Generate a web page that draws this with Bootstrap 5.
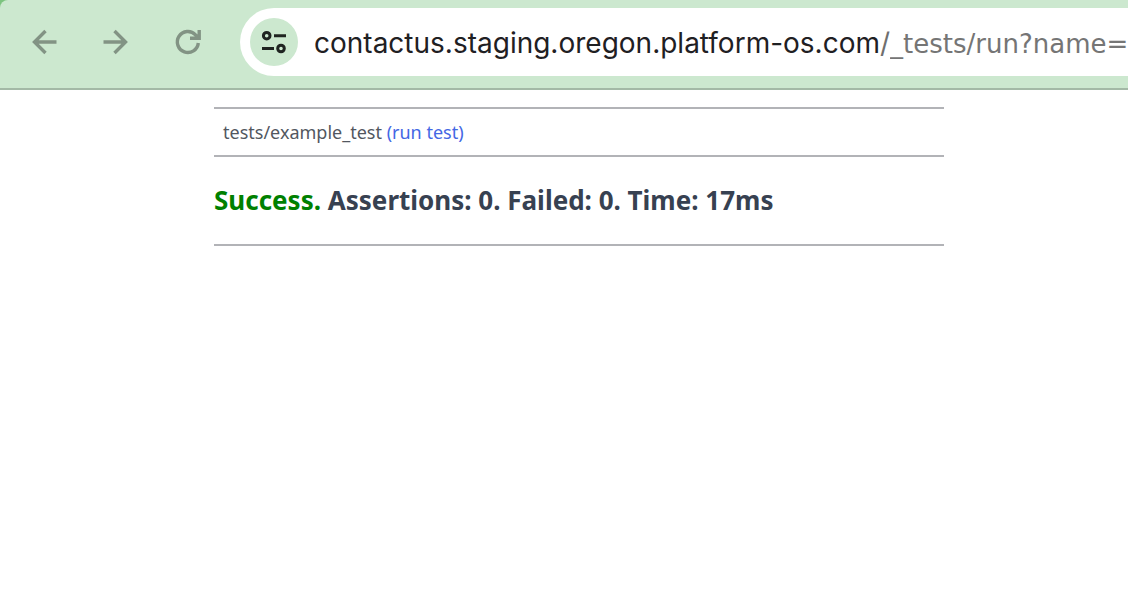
<!DOCTYPE html>
<html lang="en">
<head>
<meta charset="utf-8">
<meta name="viewport" content="width=device-width, initial-scale=1">
<title>Test run</title>
<link href="https://cdn.jsdelivr.net/npm/bootstrap@5.3.0/dist/css/bootstrap.min.css" rel="stylesheet">
<style>
  body { font-family: "Noto Sans", sans-serif; color: #374151; background: #fff; }
  .browser-frame { background: #7cc47f; }
  .browser-bar { background: #cce8cf; height: 90px; border-bottom: 2px solid #a3b9a6; border-top-left-radius: 8px; padding: 8px 0 12px 20px; }
  .tool-btn { width: 48px; height: 48px; color: #829384; }
  .address { height: 68px; margin-left: 28px; padding-left: 10px; border-radius: 34px 0 0 34px; }
  .site-btn { width: 48px; height: 48px; background: #cce8cf; color: #1f2421; }
  .host-label { font-family: Inter, sans-serif; font-size: 28px; line-height: 36px; margin-left: 16px; padding-top: 2px; color: #1f2023; }
  .path-mark { color: #6f6f6f; }
  .path-input { font-family: "DejaVu Sans", sans-serif; font-size: 26px; line-height: 36px; color: #757575; background: none; outline: 0; padding: 3px 0 0; }
  .report { padding-left: 30px; padding-top: 17px; }
  .report-body { max-width: 730px; }
  .report-rule { border-top: 2px solid #b2b3b7; opacity: 1; }
  .test-line { font-size: 18px; line-height: 26px; padding: 10px 9px; color: #52575f; }
  .test-line a { color: #4467e4; }
  .result { font-size: 26px; line-height: 40px; padding: 23px 0 24px; }
  .passed { color: #008000; }
</style>
</head>
<body>
<header class="browser-frame">
  <nav class="browser-bar d-flex align-items-center overflow-hidden" aria-label="Browser">
    <div class="d-flex gap-4 flex-shrink-0">
      <button type="button" class="tool-btn btn p-0 border-0" aria-label="Back"><svg class="d-block" width="48" height="48" viewBox="0 0 48 48" fill="none" stroke="currentColor" stroke-width="3.400"><path d="M36.500 24H14.500M25.500 13L14.500 24L25.500 35"/></svg></button>
      <button type="button" class="tool-btn btn p-0 border-0" aria-label="Forward"><svg class="d-block" width="48" height="48" viewBox="0 0 48 48" fill="none" stroke="currentColor" stroke-width="3.400"><path d="M11.500 24H33.500M22.500 13L33.500 24L22.500 35"/></svg></button>
      <button type="button" class="tool-btn btn p-0 border-0" aria-label="Reload"><svg class="d-block" width="48" height="48" viewBox="0 0 48 48" fill="none" stroke="currentColor" stroke-width="3.400"><path d="M34.300 25A10.500 10.500 0 1 1 31.500 16.800L34 19.500M35.200 12V20.300H26"/></svg></button>
    </div>
    <div class="address bg-white d-flex align-items-center flex-grow-1 overflow-hidden">
      <button type="button" class="site-btn btn p-0 border-0 rounded-circle flex-shrink-0" aria-label="Site information"><svg class="d-block" width="48" height="48" viewBox="0 0 48 48" fill="none" stroke="currentColor" stroke-width="3"><circle cx="16.700" cy="17.700" r="3.300"/><path d="M24 17.700H36M12 30.500H24"/><circle cx="31" cy="30.500" r="3.300"/></svg></button>
      <label class="host-label text-nowrap flex-shrink-0" for="path">contactus.staging.oregon.platform-os.com<span class="path-mark">/</span></label>
      <input id="path" class="path-input border-0 flex-grow-1" type="text" value="_tests/run?name=t">
    </div>
  </nav>
</header>
<main class="report">
  <div class="report-body mx-auto">
    <hr class="report-rule m-0">
    <div class="test-line">tests/example_test <a href="#" class="text-decoration-none">(run test)</a></div>
    <hr class="report-rule m-0">
    <h1 class="result fw-bold m-0"><span class="passed">Success.</span> Assertions: 0. Failed: 0. Time: 17ms</h1>
    <hr class="report-rule m-0">
  </div>
</main>
<script src="https://cdn.jsdelivr.net/npm/bootstrap@5.3.0/dist/js/bootstrap.bundle.min.js"></script>
</body>
</html>
